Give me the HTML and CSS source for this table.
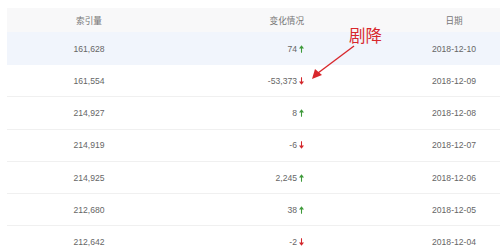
FILE: index.html
```html
<!DOCTYPE html>
<html lang="zh">
<head>
<meta charset="utf-8">
<link rel="stylesheet" href="styles.css">
</head>
<body>
<div class="table">
  <div class="row head">
    <div class="c1">索引量</div>
    <div class="c2">变化情况</div>
    <div class="c3">日期</div>
  </div>
  <div class="row hover">
    <div class="c1">161,628</div>
    <div class="c2">74<svg class="ar up" viewBox="0 0 6 9"><path d="M3 9V2"/><path class="h" d="M0 4L3 0L6 4Z"/></svg></div>
    <div class="c3">2018-12-10</div>
  </div>
  <div class="row">
    <div class="c1">161,554</div>
    <div class="c2">-53,373<svg class="ar down" viewBox="0 0 6 9"><path d="M3 0V7"/><path class="h" d="M0 5L3 9L6 5Z"/></svg></div>
    <div class="c3">2018-12-09</div>
  </div>
  <div class="row">
    <div class="c1">214,927</div>
    <div class="c2">8<svg class="ar up" viewBox="0 0 6 9"><path d="M3 9V2"/><path class="h" d="M0 4L3 0L6 4Z"/></svg></div>
    <div class="c3">2018-12-08</div>
  </div>
  <div class="row">
    <div class="c1">214,919</div>
    <div class="c2">-6<svg class="ar down" viewBox="0 0 6 9"><path d="M3 0V7"/><path class="h" d="M0 5L3 9L6 5Z"/></svg></div>
    <div class="c3">2018-12-07</div>
  </div>
  <div class="row">
    <div class="c1">214,925</div>
    <div class="c2">2,245<svg class="ar up" viewBox="0 0 6 9"><path d="M3 9V2"/><path class="h" d="M0 4L3 0L6 4Z"/></svg></div>
    <div class="c3">2018-12-06</div>
  </div>
  <div class="row">
    <div class="c1">212,680</div>
    <div class="c2">38<svg class="ar up" viewBox="0 0 6 9"><path d="M3 9V2"/><path class="h" d="M0 4L3 0L6 4Z"/></svg></div>
    <div class="c3">2018-12-05</div>
  </div>
  <div class="row">
    <div class="c1">212,642</div>
    <div class="c2">-2<svg class="ar down" viewBox="0 0 6 9"><path d="M3 0V7"/><path class="h" d="M0 5L3 9L6 5Z"/></svg></div>
    <div class="c3">2018-12-04</div>
  </div>
</div>
<div class="note">剧降</div>
<svg class="pointer" viewBox="0 0 500 250" width="500" height="250">
  <path d="M354 46 L318 73" />
  <polygon points="312,79 315,69 322,75" />
</svg>
</body>
</html>
```
FILE: styles.css
```css
html, body {
  margin: 0;
  padding: 0;
  background: #fff;
  overflow: hidden;
}
body {
  width: 500px;
  height: 250px;
  position: relative;
  font-family: "Liberation Sans", "Noto Sans CJK SC", sans-serif;
  font-size: 8.6px;
  color: #666;
}
.table {
  margin: 8px 0 0 7px;
}
.row {
  display: grid;
  grid-template-columns: 164px 237px 1fr;
  align-items: center;
  height: 31.3px;
  border-bottom: 1px solid #f0f0f0;
}
.row.head {
  height: 24px;
  border-bottom: none;
  background: #f8f8f9;
  color: #777;
}
.row.hover {
  height: 33px;
  border-bottom: none;
  background: #f1f5fc;
}
.c1 {
  text-align: center;
}
.c2 {
  display: flex;
  justify-content: flex-end;
  align-items: center;
  padding-right: 104px;
}
.c3 {
  text-align: center;
}
.ar {
  width: 5px;
  height: 8px;
  margin-left: 2px;
  fill: none;
  stroke-width: 1.3;
}
.ar .h {
  stroke: none;
}
.ar.up {
  stroke: #3e9a3a;
}
.ar.up .h {
  fill: #3e9a3a;
}
.ar.down {
  stroke: #d3262b;
}
.ar.down .h {
  fill: #d3262b;
}
.note {
  position: absolute;
  left: 349px;
  top: 26px;
  font-family: "Noto Sans CJK SC", sans-serif;
  font-size: 16.5px;
  line-height: 18px;
  color: #d8272c;
}
.pointer {
  position: absolute;
  left: 0;
  top: 0;
  pointer-events: none;
}
.pointer path {
  stroke: #d8272c;
  stroke-width: 1.4;
  fill: none;
}
.pointer polygon {
  fill: #d8272c;
}
```
